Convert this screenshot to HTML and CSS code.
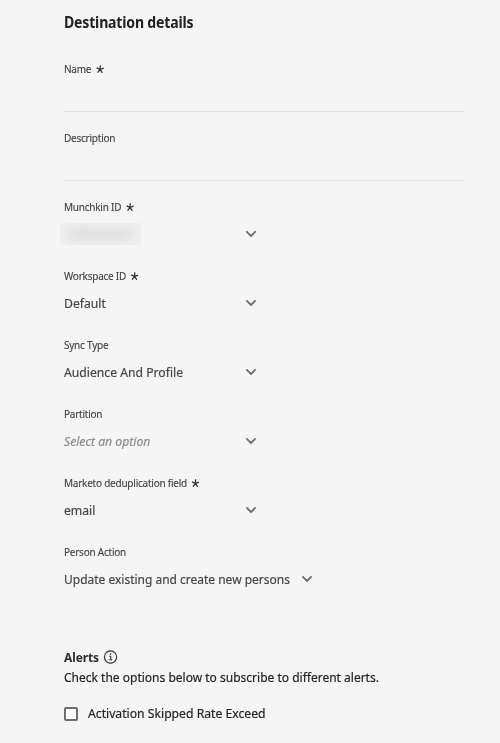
FILE: index.html
```
<!DOCTYPE html>
<html lang="en">
<head>
<meta charset="utf-8">
<title>Destination details</title>
<link rel="stylesheet" href="styles.css">
</head>
<body>
<svg class="symbols" aria-hidden="true">
  <symbol id="chevron" viewBox="0 0 12 8"><path d="M1.9 1.9 6 6 10.1 1.9" fill="none" stroke="currentColor" stroke-width="1.8" stroke-linecap="round" stroke-linejoin="round"/></symbol>
  <symbol id="star" viewBox="0 0 8 8"><path d="M4 4.2 4.2.3M4 4.2 7.8 3M4 4.2 6.3 7.5M4 4.2 1.4 7.2M4 4.2.4 2.6" fill="none" stroke="currentColor" stroke-width="1.3"/></symbol>
</svg>
<main class="form">
  <h1 class="title">Destination details</h1>
  <div class="field input"><div class="label"><span>Name</span><svg class="star"><use href="#star"/></svg></div><div class="value"></div></div>
  <div class="field input"><div class="label"><span>Description</span></div><div class="value"></div></div>
  <div class="field"><div class="label"><span>Munchkin ID</span><svg class="star"><use href="#star"/></svg></div><div class="value"><span class="redacted"><i></i></span><svg class="chevron"><use href="#chevron"/></svg></div></div>
  <div class="field"><div class="label"><span>Workspace ID</span><svg class="star"><use href="#star"/></svg></div><div class="value"><span class="text">Default</span><svg class="chevron"><use href="#chevron"/></svg></div></div>
  <div class="field"><div class="label"><span>Sync Type</span></div><div class="value"><span class="text">Audience And Profile</span><svg class="chevron"><use href="#chevron"/></svg></div></div>
  <div class="field"><div class="label"><span>Partition</span></div><div class="value"><span class="text placeholder">Select an option</span><svg class="chevron"><use href="#chevron"/></svg></div></div>
  <div class="field"><div class="label"><span>Marketo deduplication field</span><svg class="star"><use href="#star"/></svg></div><div class="value"><span class="text">email</span><svg class="chevron"><use href="#chevron"/></svg></div></div>
  <div class="field wide"><div class="label"><span>Person Action</span></div><div class="value"><span class="text">Update existing and create new persons</span><svg class="chevron"><use href="#chevron"/></svg></div></div>
  <section class="alerts">
    <h2 class="heading"><span>Alerts</span><svg class="info" viewBox="0 0 14 14"><circle cx="7" cy="7" r="6.1" fill="none" stroke="currentColor" stroke-width="1.1"/><path d="M5.8 6.2H7.2V9.8M5.6 9.8H8.6" fill="none" stroke="currentColor" stroke-width="1"/><circle cx="7" cy="4.1" r=".8" fill="currentColor"/></svg></h2>
    <p class="hint">Check the options below to subscribe to different alerts.</p>
    <label class="option"><span class="box"></span><span class="text">Activation Skipped Rate Exceed</span></label>
  </section>
</main>
</body>
</html>
```
FILE: styles.css
```
body { margin: 0; background: #f5f5f5; color: #222; font-family: "Noto Sans", sans-serif; font-size: 13px; }
.symbols { position: absolute; width: 0; height: 0; }
.form { width: 400px; margin-left: 64px; white-space: nowrap; }
.title { margin: 0; padding-top: 11px; height: 48px; box-sizing: border-box; font-size: 15.5px; line-height: 22px; font-weight: 700; letter-spacing: -.2px; transform: scaleX(.907); transform-origin: left; }
.field { height: 69px; width: 193px; padding-top: 12px; box-sizing: border-box; color: #444; }
.label { display: flex; align-items: flex-start; gap: 4.5px; height: 18px; line-height: 18px; font-size: 11px; letter-spacing: -.25px; -webkit-text-stroke: .15px; transform: scaleX(.908); transform-origin: left; }
.star { width: 9.5px; height: 8.5px; margin-top: 5px; color: #333; }
.value { display: flex; align-items: center; justify-content: space-between; height: 36px; }
.text { -webkit-text-stroke: .2px; transform: scaleX(.937); transform-origin: left; }
.input { width: 400px; }
.input .value { height: 34px; box-sizing: border-box; border-bottom: 1px solid #e0e0e0; }
.wide { width: 249px; }
.wide .text { width: 236px; transform: scaleX(.922); }
.chevron { flex: none; width: 12px; height: 8px; color: #6e6e6e; }
.placeholder { color: #8c8c8c; font-style: italic; }
.redacted { width: 81px; height: 22px; margin-left: -4px; overflow: hidden; background: #f0f0f0; }
.redacted i { display: block; width: 65px; height: 10px; margin: 6px 8px; background: #dadada; filter: blur(6px); }
.alerts { margin-top: 48px; }
.heading { display: flex; align-items: center; gap: 5px; height: 18px; margin: 0; font-size: 13px; color: #2c2c2c; letter-spacing: -.1px; transform: scaleX(.92); transform-origin: left; }
.info { width: 15.2px; height: 14px; overflow: visible; }
.info * { transform: scaleX(1.087); transform-origin: 7px 7px; }
.hint { margin: 2px 0 0; line-height: 18px; -webkit-text-stroke: .2px; transform: scaleX(.924); transform-origin: left; }
.option { display: flex; align-items: center; gap: 10px; height: 18px; margin-top: 18px; }
.box { width: 14px; height: 14px; margin-top: 2px; box-sizing: border-box; border: 2px solid #6e6e6e; border-radius: 2px; background: #fff; }
```
